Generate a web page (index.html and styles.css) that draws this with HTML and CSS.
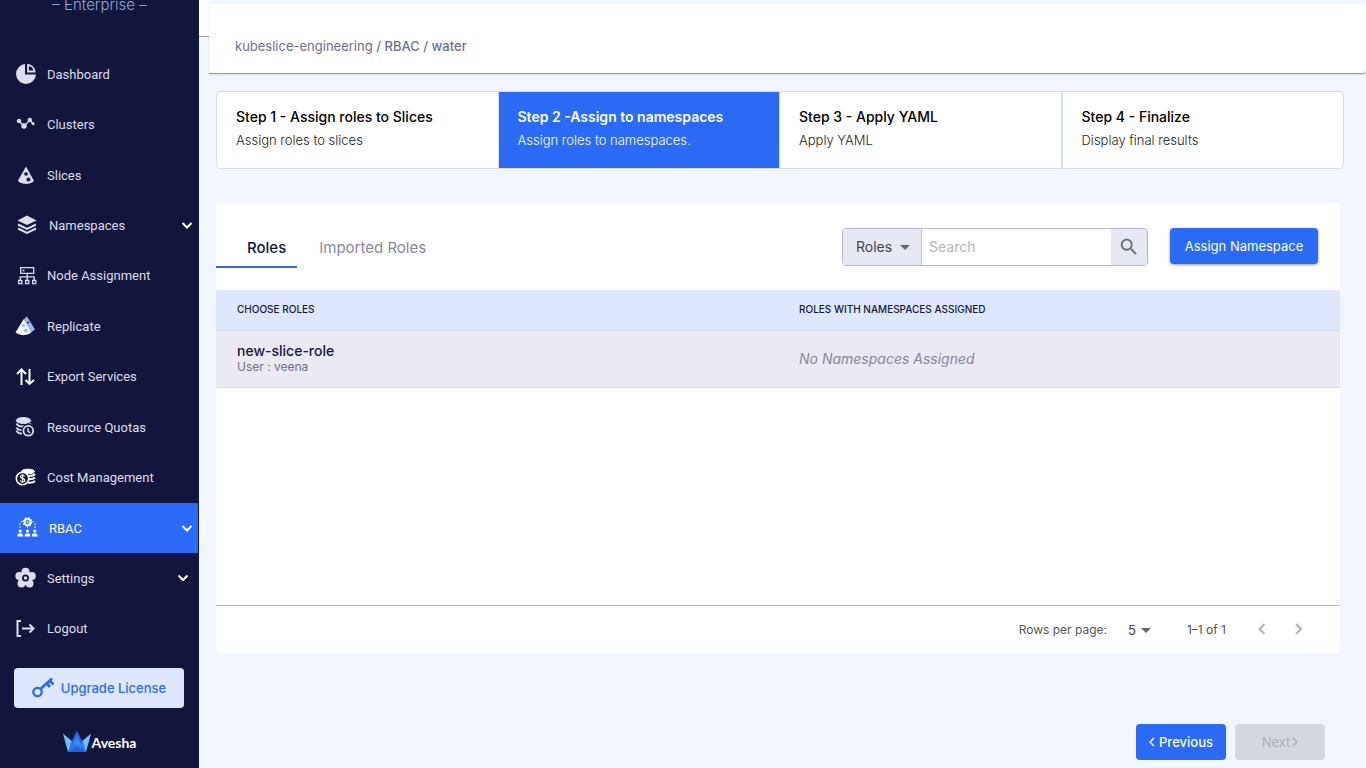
FILE: index.html
```html
<!DOCTYPE html>
<html lang="en">
<head>
    <meta charset="UTF-8">
    <meta name="viewport" content="width=device-width, initial-scale=1.0">
    <title>RBAC - Assign to namespaces</title>
    <link rel="stylesheet" href="styles.css">
</head>
<body>
    <!-- Sidebar -->
    <aside class="sidebar">
        <div class="brand-edition">– Enterprise –</div>

        <nav class="side-nav">
            <a href="#" class="side-link">
                <svg class="side-icon" viewBox="0 0 22 22" fill="#dcdfea"><path d="M10 1a10 10 0 1 0 11 10.500H10z"/><path d="M13 2v6.500h6.500A7 7 0 0 0 13 2z" fill="none" stroke="#dcdfea" stroke-width="1.800"/></svg>
                <span>Dashboard</span>
            </a>
            <a href="#" class="side-link">
                <svg class="side-icon" viewBox="0 0 22 22" fill="#dcdfea"><path d="M4 7l5 5 6-6 4 5" fill="none" stroke="#dcdfea" stroke-width="1.300"/><circle cx="4" cy="7" r="2.200"/><circle cx="9" cy="12" r="2.700"/><circle cx="14.800" cy="6" r="2.200"/><circle cx="18" cy="9.500" r="1.500"/></svg>
                <span>Clusters</span>
            </a>
            <a href="#" class="side-link">
                <svg class="side-icon" viewBox="0 0 22 22"><path d="M11 2.500L18.800 16.500Q18.500 19 11 20 3.500 19 3 16.500z" fill="#dcdfea"/><g fill="#13163c"><circle cx="11" cy="10" r="1.800"/><circle cx="13.500" cy="15.500" r="2"/></g></svg>
                <span>Slices</span>
            </a>
            <a href="#" class="side-link side-link-group">
                <svg class="side-icon" viewBox="0 0 22 22"><path d="M10 1.500L19.500 6.500 10 11 .5 6.500z" fill="#dcdfea"/><path d="M1 10.500l9 4.500 9-4.500M1 14.500l9 4.500 9-4.500" fill="none" stroke="#dcdfea" stroke-width="2"/></svg>
                <span>Namespaces</span>
                <svg class="chevron" viewBox="0 0 12 12"><path d="M1.500 4L6 8.500 10.500 4"/></svg>
            </a>
            <a href="#" class="side-link">
                <svg class="side-icon" viewBox="0 0 22 22" fill="none" stroke="#dcdfea" stroke-width="1.300"><path d="M5.700 2.700h13v5.600h-13zM12.200 8.300v7M5.200 15.300v-3.500h14v3.500M7.500 5.500h2M3.700 15.500h3.200v3.200H3.700zM10.600 15.500h3.200v3.200h-3.200zM17.600 15.500h3.200v3.200h-3.200z"/></svg>
                <span>Node Assignment</span>
            </a>
            <a href="#" class="side-link">
                <svg class="side-icon" viewBox="0 0 22 22"><path d="M12 1.500L20 14.500l-5 3.500L9 4z" fill="#9bb8f5"/><path d="M8.800 4L16 18Q8 22.500.5 17.500z" fill="#fff"/><g fill="#9bb8f5"><circle cx="8.500" cy="10.500" r="1.700"/><circle cx="10.800" cy="15.500" r="1.900"/></g><circle cx="13" cy="7.500" r="1" fill="#13163c"/></svg>
                <span>Replicate</span>
            </a>
            <a href="#" class="side-link">
                <svg class="side-icon" viewBox="0 0 22 22" fill="none" stroke="#fff" stroke-width="2"><path d="M6.500 19V4.500M2 8l4.500-4.500L11 8M14.500 3v14.500M10.500 14l4 4 4.500-4"/></svg>
                <span>Export Services</span>
            </a>
            <a href="#" class="side-link">
                <svg class="side-icon" viewBox="0 0 22 22" fill="none" stroke="#dcdfea"><ellipse cx="8.500" cy="4.500" rx="7.200" ry="3" fill="#dcdfea"/><path d="M1.500 7.500q1 3 7 3 6 0 7-3M1.500 11.500q1 2.500 6 2.700M1.500 14.500q1 3 5.500 3" stroke-width="2"/><circle cx="13.300" cy="14.800" r="6.500" fill="#13163c" stroke="#13163c"/><circle cx="13.300" cy="14.800" r="4.900" fill="#13163c" stroke-width="1.800"/><path d="M13 12v3.300l2.200 1.500" stroke-width="1.400"/></svg>
                <span>Resource Quotas</span>
            </a>
            <a href="#" class="side-link">
                <svg class="side-icon" viewBox="0 0 22 22" fill="none" stroke="#fff"><ellipse cx="13" cy="4.500" rx="6.500" ry="2.300" fill="#fff"/><path d="M12 8.800q6 .5 8-1.800M13 12.300q5 .3 7-1.800M13 15.800q5 .3 7-1.800" stroke-width="2"/><circle cx="7.500" cy="11.500" r="6.200" fill="#13163c" stroke-width="1.600"/><path d="M9.500 9.500q-.5-1.300-2-1.300-2 0-2 1.600 0 1.400 2 1.600 2.200.3 2.200 1.800 0 1.600-2.200 1.600-1.800 0-2.200-1.500M7.500 7v9" stroke-width="1.200"/></svg>
                <span>Cost Management</span>
            </a>
            <a href="#" class="side-link side-link-group active">
                <svg class="side-icon" viewBox="0 0 22 22" fill="#fff"><circle cx="10.500" cy="5" r="3" fill="none" stroke="#fff" stroke-width="2"/><circle cx="10.500" cy="5" r="4.200" fill="none" stroke="#fff" stroke-width="1.200" stroke-dasharray="1.700 1.600"/><circle cx="10.500" cy="5" r="0.900"/><path d="M3 11V6.500Q3.500 4.500 5.500 4.500M18 11V6.500Q17.500 4.500 15.500 4.500M10.500 9v3" fill="none" stroke="#fff" stroke-dasharray="1.800 1.200"/><circle cx="3.200" cy="14" r="1.600"/><circle cx="10.500" cy="14" r="1.600"/><circle cx="17.800" cy="14" r="1.600"/><path d="M.3 19.500q0-3.300 2.900-3.300t2.900 3.300zM7.600 19.500q0-3.300 2.900-3.300t2.900 3.300zM14.900 19.500q0-3.300 2.900-3.300t2.900 3.300z"/></svg>
                <span>RBAC</span>
                <svg class="chevron" viewBox="0 0 12 12"><path d="M1.500 4L6 8.500 10.500 4"/></svg>
            </a>
            <a href="#" class="side-link side-link-settings">
                <svg class="side-icon" viewBox="0 0 22 22" fill="#dcdfea"><circle cx="10.500" cy="4.800" r="4"/><circle cx="16.800" cy="9" r="4"/><circle cx="14.500" cy="16.500" r="4"/><circle cx="6.500" cy="16.500" r="4"/><circle cx="4.300" cy="9" r="4"/><circle cx="10.500" cy="11" r="7"/><circle cx="10.500" cy="11" r="2.600" fill="none" stroke="#13163c" stroke-width="1.800"/></svg>
                <span>Settings</span>
                <svg class="chevron" viewBox="0 0 12 12"><path d="M1.500 3.500L6 8l4.500-4.500"/></svg>
            </a>
            <a href="#" class="side-link">
                <svg class="side-icon" viewBox="0 0 22 22" fill="none" stroke="#dcdfea" stroke-width="2"><path d="M6 3H2.500v15H6M7 10.500h11M14.500 6.500l4 4-4 4"/></svg>
                <span>Logout</span>
            </a>
        </nav>

        <button type="button" class="upgrade-btn">
            <svg class="key-icon" viewBox="0 0 22 22" fill="none" stroke="#2a6af5" stroke-width="2.300"><circle cx="5.500" cy="15" r="4.200"/><path d="M8.500 12L20 1.500M14.500 6l3.500 4M17.500 3.500l4 4" stroke-width="2.700"/></svg>
            Upgrade License
        </button>

        <a href="#" class="company-logo">
            <svg class="crown" viewBox="0 0 28 22"><path d="M0 2.500L11 12 5 21z" fill="#6cc0fb"/><path d="M28 2.500L17 12l6 9z" fill="#6cc0fb"/><path d="M14 0l6.500 12.500L14 18 7.500 12.500z" fill="#2b63e3"/><path d="M8 11l6 5.500L20 11l3 10H5z" fill="#2b7de9"/><path d="M5 21l9-6 9 6z" fill="#2860dc"/><path d="M14 5l4 8-4 3-4-3z" fill="#3388f2"/></svg>
            <span>Avesha</span>
        </a>
    </aside>

    <main class="main">
        <header class="page-header">
            <div class="header-stub"></div>
            <div class="header-bar">
                <div class="breadcrumbs">
                    <a href="#">kubeslice-engineering</a> <b>/ <a href="#">RBAC</a> / water</b>
                </div>
            </div>
        </header>

        <!-- Steps -->
        <ol class="steps">
            <li class="step">
                <h2>Step 1 - Assign roles to Slices</h2>
                <p>Assign roles to slices</p>
            </li>
            <li class="step current">
                <h2>Step 2 -Assign to namespaces</h2>
                <p>Assign roles to namespaces.</p>
            </li>
            <li class="step">
                <h2>Step 3 - Apply YAML</h2>
                <p>Apply YAML</p>
            </li>
            <li class="step">
                <h2>Step 4 - Finalize</h2>
                <p>Display final results</p>
            </li>
        </ol>

        <section class="card">
            <div class="toolbar">
                <div class="tabs">
                    <button type="button" class="tab selected">Roles</button>
                    <button type="button" class="tab">Imported Roles</button>
                </div>
                <form class="search">
                    <div class="select-wrap search-type">
                        <select aria-label="Search in">
                            <option>Roles</option>
                        </select>
                        <svg class="caret" viewBox="0 0 10 5"><path d="M0 0h10L5 5z"/></svg>
                    </div>
                    <input type="text" placeholder="Search" aria-label="Search">
                    <button type="button" class="search-btn" aria-label="Search">
                        <svg viewBox="0 0 24 24"><path d="M15.500 14h-.79l-.28-.27C15.410 12.590 16 11.110 16 9.500 16 5.910 13.090 3 9.500 3S3 5.910 3 9.500 5.910 16 9.500 16c1.610 0 3.090-.59 4.230-1.570l.27.28v.79l5 4.990L20.490 19l-4.990-5zm-6 0C7.010 14 5 11.990 5 9.500S7.010 5 9.500 5 14 7.010 14 9.500 11.990 14 9.500 14z"/></svg>
                    </button>
                </form>
                <button type="button" class="btn assign-btn">Assign Namespace</button>
            </div>

            <div class="table-area">
                <table class="roles-table">
                    <thead>
                        <tr>
                            <th>CHOOSE ROLES</th>
                            <th>ROLES WITH NAMESPACES ASSIGNED</th>
                        </tr>
                    </thead>
                    <tbody>
                        <tr>
                            <td>
                                <div class="role-name">new-slice-role</div>
                                <div class="role-user">User : veena</div>
                            </td>
                            <td class="empty">No Namespaces Assigned</td>
                        </tr>
                    </tbody>
                </table>
            </div>

            <div class="pagination">
                <label for="rows">Rows per page:</label>
                <div class="select-wrap rows-select">
                    <select id="rows">
                        <option>5</option>
                    </select>
                    <svg class="caret" viewBox="0 0 10 5"><path d="M0 0h10L5 5z"/></svg>
                </div>
                <span class="range">1–1 of 1</span>
                <button type="button" class="page-btn" aria-label="Previous page" disabled>
                    <svg viewBox="0 0 12 12"><path d="M8.500 1l-5 5 5 5"/></svg>
                </button>
                <button type="button" class="page-btn" aria-label="Next page" disabled>
                    <svg viewBox="0 0 12 12"><path d="M4 1l5 5-5 5"/></svg>
                </button>
            </div>
        </section>

        <div class="wizard-actions">
            <button type="button" class="btn">
                <svg class="arrow" viewBox="0 0 6 10"><path d="M5 1L1 5l4 4"/></svg>
                Previous
            </button>
            <button type="button" class="btn next" disabled>
                Next
                <svg class="arrow" viewBox="0 0 6 10"><path d="M1 1l4 4-4 4"/></svg>
            </button>
        </div>
    </main>
</body>
</html>
```

FILE: styles.css
```css
:root {
    --blue: #2a6af5;
    --navy: #13163c;
    --page-bg: #f2f7ff;
    --light-blue: #dde8ff;
    --border: #d5dcee;
    --lilac: #b3b4d6;
}

* {
    box-sizing: border-box;
}

body {
    margin: 0;
    display: flex;
    min-height: 100vh;
    background: var(--page-bg);
    color: #13163c;
    font-family: Inter, "Liberation Sans", sans-serif;
    font-size: 13px;
}

button, input, select {
    font-family: inherit;
    font-size: 13px;
}

button {
    border: 0;
    padding: 0;
    cursor: pointer;
}

a {
    color: inherit;
    text-decoration: none;
}

/* Sidebar */
.sidebar {
    width: 199px;
    flex-shrink: 0;
    display: flex;
    flex-direction: column;
    background: var(--navy);
    color: #dcdfea;
}

.brand-edition {
    height: 54px;
    margin-top: -5px;
    text-align: center;
    font-size: 15px;
    font-weight: 300;
    line-height: 20px;
    color: #8fa9dc;
}

.side-nav {
    flex: 1;
    display: flex;
    flex-direction: column;
    margin-right: 1px;
    font-family: Roboto, sans-serif;
    font-size: 13px;
}

.side-link {
    flex: 1;
    display: flex;
    align-items: center;
    gap: 10px;
    padding: 0 5px 0 15px;
}

.side-link-group {
    padding-left: 17px;
}

.side-link-settings {
    padding-right: 9px;
}

.side-link.active {
    background: var(--blue);
    color: #fff;
}

.side-icon {
    width: 22px;
    height: 22px;
}

.chevron {
    width: 12px;
    height: 12px;
    margin-left: auto;
    fill: none;
    stroke: #fff;
    stroke-width: 2;
}

.upgrade-btn {
    height: 40px;
    margin: 14px 15px 0 14px;
    display: flex;
    align-items: center;
    justify-content: center;
    gap: 7px;
    border-radius: 4px;
    background: var(--light-blue);
    color: var(--blue);
    font-weight: 500;
}

.key-icon {
    width: 22px;
    height: 22px;
}

.company-logo {
    height: 60px;
    display: flex;
    align-items: center;
    justify-content: center;
    gap: 1px;
    padding-top: 8px;
    color: #fff;
    font-family: Lato, sans-serif;
    font-size: 14px;
    font-weight: 700;
}

.crown {
    width: 28px;
    height: 22px;
}

/* Header */
.main {
    flex: 1;
    min-width: 0;
}

.page-header {
    display: flex;
    align-items: flex-start;
}

.header-stub {
    width: 10px;
    height: 37px;
    background: #fff;
    border-bottom: 1px solid #9a9da8;
}

.header-bar {
    flex: 1;
    padding-top: 4px;
}

.breadcrumbs {
    height: 70px;
    padding-left: 26px;
    border-bottom: 1px solid #9a9da8;
    border-radius: 0 4px 4px 0;
    background: #fff;
    color: #6d7089;
    font-size: 13px;
    line-height: 85px;
    box-shadow: 0 1px 2px rgba(0, 0, 0, 0.1);
}

.breadcrumbs b {
    font-weight: 500;
}

/* Steps */
.steps {
    display: flex;
    list-style: none;
    margin: 17px 22px 0 17px;
    padding: 0;
    border: 1px solid var(--border);
    border-radius: 4px;
    background: #fff;
    overflow: hidden;
}

.step {
    flex: 1;
    height: 76px;
    padding: 16px 19px;
    border-right: 1px solid var(--border);
}

.step:last-child {
    border-right: 0;
    border-left: 1px solid var(--border);
}

.step h2 {
    margin: 0 0 5px;
    font-size: 14px;
    line-height: 18px;
    font-weight: 500;
    color: #000;
}

.step p {
    margin: 0;
    font-size: 13px;
    line-height: 18px;
    font-weight: 300;
    color: #222;
}

.step.current {
    background: var(--blue);
}

.step.current h2 {
    color: #fff;
    font-weight: 600;
}

.step.current p {
    color: #fff;
}

/* Roles card */
.card {
    margin: 34px 26px 0 17px;
    border-radius: 4px;
    background: #fff;
}

.toolbar {
    height: 87px;
    display: flex;
    align-items: flex-start;
    padding: 25px 22px 0 0;
}

.tabs {
    display: flex;
    flex: 1;
}

.tab {
    height: 40px;
    padding: 0 11px 2px;
    background: none;
    color: #8687a0;
    font-size: 15px;
}

.tab.selected {
    padding: 0 11px 0 31px;
    margin-right: 11px;
    border-bottom: 2px solid var(--blue);
    color: var(--navy);
    font-weight: 500;
}

.search {
    display: flex;
    width: 306px;
    height: 38px;
    border: 1px solid var(--lilac);
    border-radius: 4px;
    overflow: hidden;
}

.select-wrap {
    position: relative;
}

.select-wrap select {
    width: 100%;
    height: 100%;
    border: 0;
    background: none;
    appearance: none;
    color: #444;
}

.caret {
    position: absolute;
    right: 11px;
    top: 50%;
    width: 10px;
    height: 5px;
    margin-top: -2px;
    fill: #666;
    pointer-events: none;
}

.search-type {
    width: 79px;
    background: #e6e8f4;
    border-right: 1px solid #c4c6d6;
}

.search-type select {
    padding: 0 0 2px 13px;
    font-size: 14px;
}

.search input {
    flex: 1;
    min-width: 0;
    border: 0;
    padding: 0 7px 2px;
    background: #fff;
    font-size: 14px;
}

.search input::placeholder {
    color: #b5b5b8;
}

.search-btn {
    width: 36px;
    background: #e6e8f4;
}

.search-btn svg {
    display: block;
    width: 22px;
    height: 22px;
    margin: 0 auto;
    fill: #6b6d75;
}

.btn {
    height: 36px;
    border-radius: 4px;
    background: var(--blue);
    color: #fff;
    font-weight: 500;
}

.assign-btn {
    width: 148px;
    margin-left: 22px;
    font-weight: 400;
    box-shadow: 0 1px 3px rgba(0, 0, 0, 0.4);
}

.table-area {
    min-height: 315px;
}

.roles-table {
    width: 100%;
    table-layout: fixed;
    border-collapse: separate;
    border-spacing: 0;
    text-align: left;
}

.roles-table th {
    height: 41px;
    padding: 0 21px 2px;
    background: var(--light-blue);
    border-bottom: 1px solid #dcdde3;
    font-size: 10px;
    font-weight: 500;
}

.roles-table td {
    height: 57px;
    padding: 0 21px 2px;
    background: #ebeaf4;
    border-bottom: 1px solid #dcdde3;
}

.role-name {
    font-size: 14px;
    line-height: 17px;
    font-weight: 500;
}

.role-user {
    font-size: 12px;
    line-height: 16px;
    color: #6d7089;
}

.roles-table .empty {
    color: #85869c;
    font-size: 14px;
    font-style: italic;
}

/* Pagination */
.pagination {
    height: 48px;
    display: flex;
    align-items: center;
    justify-content: flex-end;
    padding-right: 24px;
    border-top: 1px solid var(--lilac);
    color: #555;
    font-size: 12px;
}

.rows-select {
    width: 65px;
    height: 24px;
    margin-left: 13px;
}

.rows-select select {
    padding: 0 0 0 8px;
    font-size: 13px;
}

.rows-select .caret {
    right: 34px;
}

.range {
    margin: 0 18px 0 2px;
}

.page-btn {
    width: 36px;
    height: 36px;
    background: none;
}

.page-btn svg {
    width: 12px;
    height: 12px;
    fill: none;
    stroke: #b0b0b0;
    stroke-width: 2;
}

/* Previous / Next */
.wizard-actions {
    display: flex;
    justify-content: flex-end;
    gap: 9px;
    margin: 71px 41px 8px 0;
}

.wizard-actions .btn {
    width: 90px;
    display: flex;
    align-items: center;
    justify-content: center;
    gap: 4px;
}

.wizard-actions .next {
    gap: 2px;
    background: #d5d8e0;
    color: #a9adb5;
    font-weight: 400;
}

.arrow {
    width: 6px;
    height: 10px;
    fill: none;
    stroke: currentColor;
    stroke-width: 1.5;
}
```
